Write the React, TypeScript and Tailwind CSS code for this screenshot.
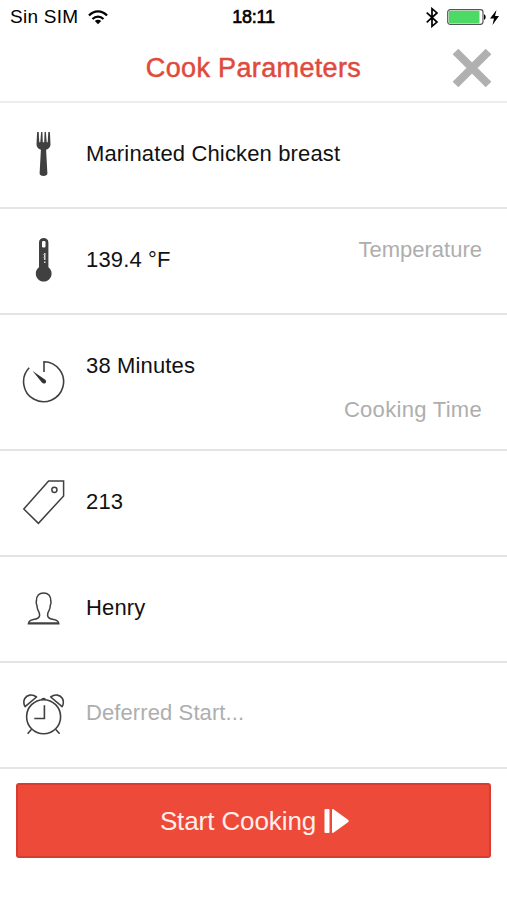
import type { ReactNode } from "react"
import clsx from "clsx"

const ForkIcon = () => (
  <svg className="h-[46px] w-11" viewBox="0.5 0 44 46" fill="#404040">
    <path d="M15.6 1h1.6l.6 10.2h1L19.6 1h1.3l.4 10.2h1.4L23.1 1h1.3l.8 10.2h1L26.8 1h1.6l.6 12.2c0 2.8-1.8 4.6-4.4 5.5l1.3 23.8c0 1.5-1.7 2.5-3.9 2.5s-3.9-1-3.9-2.5l1.3-23.8c-2.6-.9-4.400-2.700-4.400-5.500z" />
  </svg>
)

const ThermometerIcon = () => (
  <svg className="h-[46px] w-11" viewBox="0 0 44 46">
    <path
      d="M17 5.5C17 2.600 19 1 21.700 1s4.700 1.600 4.700 4.500v24.700c2 1.400 3.200 3.600 3.200 6.200 0 4.500-3.500 8.100-7.900 8.100s-7.900-3.600-7.900-8.100c0-2.600 1.200-4.800 3.200-6.200z"
      fill="#404040"
    />
    <rect x="20" y="4" width="3.500" height="6.500" rx="1.300" fill="#fff" />
    <path d="M22.800 16v7" stroke="#fff" strokeWidth="1.200" />
    <path d="M22.800 24.500v1.500" stroke="#ddd" strokeWidth="1.500" />
    <path d="M20.800 17.500h2M20.800 20.500h2" stroke="#999" strokeWidth="0.800" />
  </svg>
)

const TimerIcon = () => (
  <svg className="h-11 w-11" viewBox="0.7 0.5 44 44" fill="none" stroke="#404040" strokeWidth="1.600">
    <path d="M22.700 12.500V2.200a20 20 0 1 1-14.800 6.100" />
    <path d="M11.300 11.400l12.400 8.500c1.500 1.200 1.400 2.700.5 3.500-1 .9-2.500.8-3.600-.5z" fill="#333" stroke="none" />
  </svg>
)

const TagIcon = () => (
  <svg className="h-[46px] w-11" viewBox="0.4 0.5 44 46" fill="none" stroke="#404040" strokeWidth="1.500">
    <path d="M27 2.500h15v15L16.800 44.800 2.200 30.500z" />
    <circle cx="32.800" cy="11.300" r="2.600" />
  </svg>
)

const PersonIcon = () => (
  <svg className="h-9 w-11" viewBox="0.4 -0.5 44 36" fill="none" stroke="#404040" strokeWidth="1.500">
    <path d="M6.800 33.300h30.400c-.2-2.700-2-3.600-5-4.200-4.200-.8-6-1.700-6.200-4-.2-2.200.6-3.900 1.600-5.500.9-1.500 1-3 1.100-4.800.9-1.700.8-3.500.5-4.500C29.300 5 26.600 2.500 22 2.500S14.700 5 14.800 10.300c-.3 1-.4 2.800.5 4.500.1 1.800.2 3.300 1.100 4.800 1 1.600 1.800 3.300 1.600 5.500-.2 2.300-2 3.200-6.200 4-3 .6-4.800 1.500-5 4.200z" />
    <path d="M7 32.500h30" />
  </svg>
)

const AlarmIcon = () => (
  <svg className="h-11 w-11" viewBox="0.4 -0.7 44 44" fill="none" stroke="#404040" strokeWidth="1.600">
    <circle cx="22" cy="24" r="17" />
    <path d="M22.800 12.500v13.300H12.700" />
    <path d="M20.200 7c.2-1.500 3.400-1.500 3.600 0" />
    <path d="M14.900 4.300C10.500.9 5.200 2.200 3.200 5.800c-1.500 2.700-1 5.800.3 8.200z" strokeLinejoin="round" />
    <path d="M29.100 4.300C33.500.9 38.800 2.200 40.800 5.800c1.500 2.700 1 5.800-.3 8.200z" strokeLinejoin="round" />
    <path d="M10 36.500l-4 4.500M34 36.500l4 4.500" />
  </svg>
)

function StatusBar() {
  return (
    <div className="flex h-[34px] items-center justify-between px-2.5 text-black">
      <div className="flex w-40 items-center gap-2.5">
        <span className="text-[19px] tracking-[0.25px]">Sin SIM</span>
        <svg className="h-[15px] w-5" viewBox="0 0 20 15" fill="none" stroke="#000" strokeWidth="2.200">
          <path d="M1 5.600C6-.1 14-.1 19 5.600M4.500 9c3.200-3.300 7.800-3.300 11 0" />
          <path d="M10 14.200L6.800 11c1.800-1.700 4.600-1.700 6.400 0z" fill="#000" stroke="none" />
        </svg>
      </div>
      <span className="pt-px text-[18px] tracking-[-0.200px] [-webkit-text-stroke:0.6px_#000]">18:11</span>
      <div className="flex w-40 items-center justify-end">
        <svg className="mr-2 h-[21px] w-3.5" viewBox="0 0 14 22" fill="none" stroke="#000" strokeWidth="1.800">
          <path d="M1.500 6l10.700 9.800-5.200 4.400V1.800l5.200 4.400L1.500 16" />
        </svg>
        <svg className="h-4 w-[39px]" viewBox="0 0 39 16">
          <rect x="0.700" y="0.700" width="35.300" height="14.600" rx="2.500" fill="#fff" stroke="#555" strokeWidth="1.200" />
          <rect x="1.800" y="1.800" width="30.700" height="12.400" rx="1" fill="#4cd964" />
          <path d="M37 5.200c2.200.6 2.200 5 0 5.600z" fill="#000" />
        </svg>
        <svg className="ml-1 -mr-0.5 h-[15px] w-[9px]" viewBox="0 0 9 15">
          <path d="M6.500 0L0 8.500h4L2.500 15 9 6H5z" fill="#000" />
        </svg>
      </div>
    </div>
  )
}

function Row(props: { icon: ReactNode; value: string; label?: string; muted?: boolean; tall?: boolean }) {
  return (
    <li
      className={clsx(
        "flex border-b-2 border-[#e4e4e4] pr-[25px] pl-[22px]",
        props.tall ? "h-[136px]" : "h-[106px]"
      )}
    >
      <div className={clsx("flex w-16 shrink-0 items-center", !props.tall && "pb-0.5")}>{props.icon}</div>
      <span
        className={clsx(
          "leading-7",
          props.muted ? "pt-9 tracking-[0.1px] text-[#aeaeae]" : "pt-[37px] tracking-[0.15px] text-[#111]"
        )}
      >
        {props.value}
      </span>
      {props.label && (
        <span
          className={clsx(
            "ml-auto leading-7 text-[#aeaeae]",
            props.tall ? "self-end pb-[25px] tracking-[0.3px]" : "pt-[27px]"
          )}
        >
          {props.label}
        </span>
      )}
    </li>
  )
}

export default function App() {
  return (
    <div className="h-[900px] w-[507px] overflow-hidden bg-white font-['Liberation_Sans',Arial,sans-serif] text-[22px]">
      <StatusBar />
      <header className="grid h-[69px] grid-cols-[1fr_auto_1fr] items-center border-b-2 border-[#ececec]">
        <h1 className="col-start-2 pt-0.5 text-[27px] tracking-[0.35px] text-[#e04a3e] [-webkit-text-stroke:0.5px_#e04a3e]">
          Cook Parameters
        </h1>
        <button type="button" aria-label="Close" className="mr-[15px] justify-self-end">
          <svg className="h-10 w-10" viewBox="0 0 40 40" stroke="#b0b0b0" strokeWidth="8">
            <path d="M3.500 3.500l33 33M36.500 3.500l-33 33" />
          </svg>
        </button>
      </header>
      <ul>
        <Row icon={<ForkIcon />} value="Marinated Chicken breast" />
        <Row icon={<ThermometerIcon />} value="139.4 °F" label="Temperature" />
        <Row icon={<TimerIcon />} value="38 Minutes" label="Cooking Time" tall />
        <Row icon={<TagIcon />} value="213" />
        <Row icon={<PersonIcon />} value="Henry" />
        <Row icon={<AlarmIcon />} value="Deferred Start..." muted />
      </ul>
      <button
        type="button"
        className="mx-4 mt-3.5 flex h-[75px] w-[475px] items-center justify-center gap-2 rounded-[3px] border-2 border-[#d63d30] bg-[#ee4a39] pl-0.5 text-[26px] tracking-[-0.1px] text-[#ffeeea]"
      >
        <span className="pt-px">Start Cooking</span>
        <svg className="h-6 w-[25px]" viewBox="0 0 25 24" fill="#fff">
          <rect x="0.500" y="0" width="5" height="24" rx="1" />
          <path d="M8 1c0-1 1-1.200 1.800-.6L24 10.800c1 .7 1 1.700 0 2.400L9.800 23.600C9 24.200 8 24 8 23z" />
        </svg>
      </button>
    </div>
  )
}
